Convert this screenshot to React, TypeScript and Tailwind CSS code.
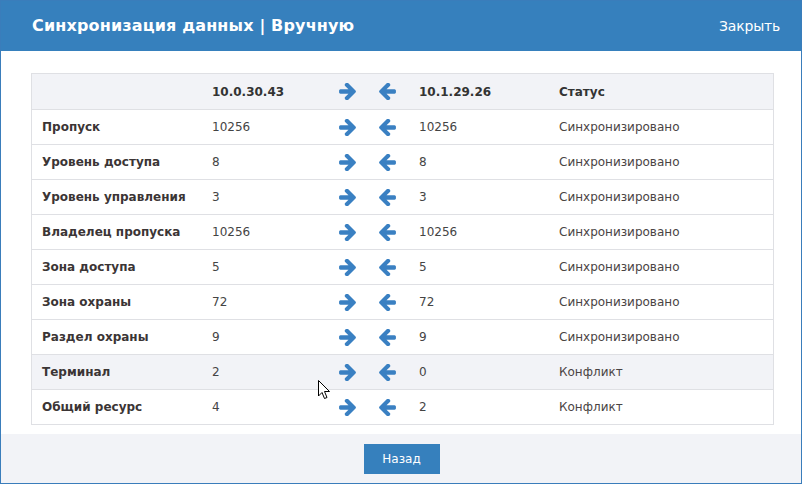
import React from "react";

const rows = [
  { label: "Пропуск", a: "10256", b: "10256", s: "Синхронизировано" },
  { label: "Уровень доступа", a: "8", b: "8", s: "Синхронизировано" },
  { label: "Уровень управления", a: "3", b: "3", s: "Синхронизировано" },
  { label: "Владелец пропуска", a: "10256", b: "10256", s: "Синхронизировано" },
  { label: "Зона доступа", a: "5", b: "5", s: "Синхронизировано" },
  { label: "Зона охраны", a: "72", b: "72", s: "Синхронизировано" },
  { label: "Раздел охраны", a: "9", b: "9", s: "Синхронизировано" },
  { label: "Терминал", a: "2", b: "0", s: "Конфликт", hl: true },
  { label: "Общий ресурс", a: "4", b: "2", s: "Конфликт" },
];

const R =
  "M1472 960q0 54-37 91l-651 651q-39 37-91 37-51 0-90-37l-75-75q-38-38-38-91t38-91l293-293h-704q-52 0-84.5-37.5t-32.5-90.5v-128q0-53 32.5-90.5t84.5-37.5h704l-293-294q-38-36-38-90t38-90l75-75q38-38 90-38 53 0 91 38l651 651q37 35 37 90z";

function ArrowRight() {
  return (
    <svg width="17" height="17" viewBox="0 218 1472 1484" fill="#3a80c2">
      <path d={R} />
    </svg>
  );
}

function ArrowLeft() {
  return (
    <svg width="17" height="17" viewBox="0 218 1472 1484" fill="#3a80c2">
      <path d={R} transform="translate(1472 0) scale(-1 1)" />
    </svg>
  );
}

const grid = "grid grid-cols-[170px_126px_38px_43px_140px_1fr] h-[35px] items-center";

export default function App() {
  return (
    <div
      className="relative w-[802px] h-[484px] border border-[#3a7dbb] flex flex-col bg-white overflow-hidden"
      style={{ fontFamily: '"DejaVu Sans", Verdana, sans-serif' }}
    >
      <div className="h-[50px] bg-[#3680bd] flex items-center justify-between pl-[31px] pr-[21px] shrink-0">
        <div className="text-white font-bold text-[16px] tracking-[0.15px]">
          Синхронизация данных | Вручную
        </div>
        <div className="text-white text-[14px] tracking-[-0.2px]">Закрыть</div>
      </div>
      <div className="flex-1 pt-[22px] pb-[9px] pl-[30px] pr-[27px]">
        <div className="border border-[#dfe0e4] text-[12px]">
          <div className={`${grid} bg-[#f2f3f7] text-[#333] font-bold`}>
            <div className="pl-[10px]"></div>
            <div className="pl-[10px]">10.0.30.43</div>
            <div className="flex justify-center"><ArrowRight /></div>
            <div className="flex justify-center"><ArrowLeft /></div>
            <div className="pl-[10px]">10.1.29.26</div>
            <div className="pl-[10px]">Статус</div>
          </div>
          {rows.map((r) => (
            <div
              key={r.label}
              className={`${grid} border-t border-[#dfe0e4] ${r.hl ? "bg-[#f2f3f7]" : "bg-white"}`}
            >
              <div className="pl-[10px] font-bold text-[#3b3535]">{r.label}</div>
              <div className="pl-[10px] text-[#444]">{r.a}</div>
              <div className="flex justify-center"><ArrowRight /></div>
              <div className="flex justify-center"><ArrowLeft /></div>
              <div className="pl-[10px] text-[#444]">{r.b}</div>
              <div className="pl-[10px] text-[#4a4444]">{r.s}</div>
            </div>
          ))}
        </div>
      </div>
      <div className="h-[50px] bg-[#f2f3f7] flex items-center justify-center shrink-0">
        <button className="w-[76px] h-[30px] bg-[#3680bd] text-white text-[12px] ml-[1px]">
          Назад
        </button>
      </div>
      <svg
        className="absolute left-[317px] top-[379px]"
        width="13"
        height="20"
        viewBox="0 0 13 20"
      >
        <path d="M0.5 0.5 L0.5 16 L4 12.5 L6.5 18.5 L9 17.5 L6.5 11.5 L11.5 11.5 Z" fill="white" stroke="black" strokeWidth="1" />
      </svg>
    </div>
  );
}
